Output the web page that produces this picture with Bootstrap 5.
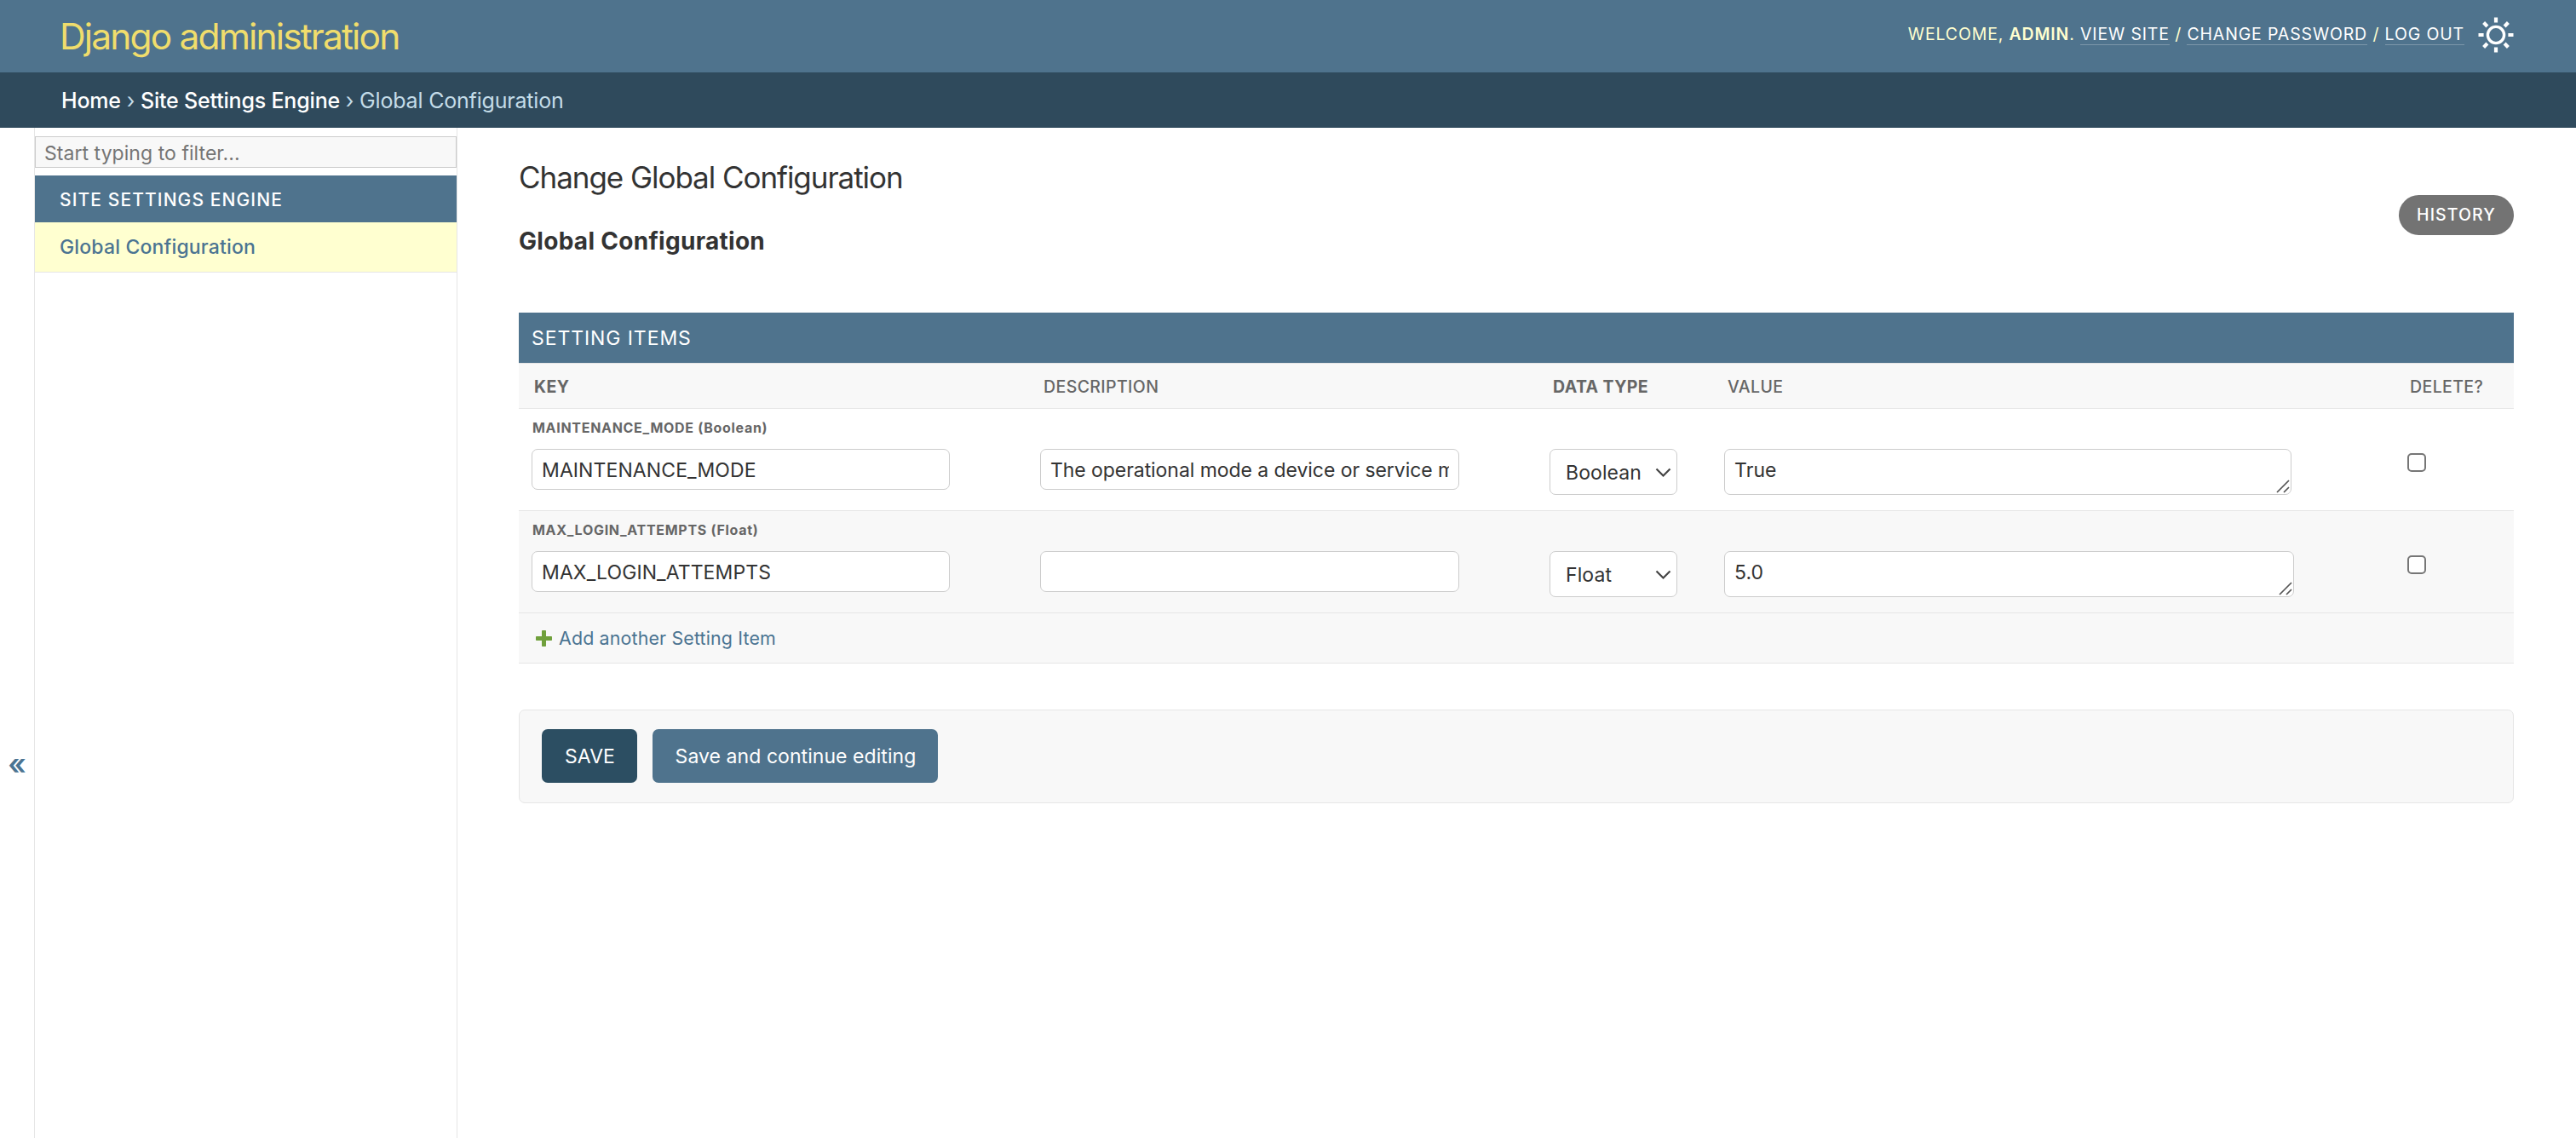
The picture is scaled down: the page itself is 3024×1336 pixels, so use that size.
<!DOCTYPE html>
<html lang="en">
<head>
  <meta charset="UTF-8" />
  <meta name="viewport" content="width=device-width, initial-scale=1" />
  <title>Change Global Configuration | Django site admin</title>
  <link href="https://cdn.jsdelivr.net/npm/bootstrap@5.3.3/dist/css/bootstrap.min.css" rel="stylesheet" />
  <style>
    :root {
      --primary: #4f738d;
      --secondary: #2f4a5c;
      --accent: #f0dd6c;
      --link-fg: #4b7492;
      --body-fg: #333;
      --quiet: #666;
      --hairline: #e6e6e6;
      --border: #ccc;
      --darkened: #f8f8f8;
    }
    body {
      font-family: Inter, "Liberation Sans", sans-serif;
      font-size: 23px;
      line-height: 1;
      color: var(--body-fg);
      background: #fff;
    }
    a {
      text-decoration: none;
      color: var(--link-fg);
    }

    /* Header */
    #site-header {
      height: 85px;
      padding: 0 73px 4px 70px;
      background: var(--primary);
      color: #ffffd0;
    }
    #site-header .navbar-brand {
      font-size: 42.5px;
      font-weight: 400;
      letter-spacing: -1.85px;
      line-height: 81px;
      padding: 3px 0 0;
      color: var(--accent);
    }
    .user-tools {
      font-size: 19.5px;
      letter-spacing: .85px;
      line-height: 24px;
      text-transform: uppercase;
      margin-right: 16px;
      padding-bottom: 1px;
      white-space: nowrap;
    }
    .user-tools a {
      color: #fff;
      border-bottom: 1px solid rgba(255, 255, 255, .25);
    }
    .user-tools strong {
      font-weight: 600;
    }

    /* Breadcrumbs */
    .crumbs {
      height: 65px;
      padding: 2px 72px 0;
      background: var(--secondary);
      color: #c4dce8;
      font-size: 25px;
      letter-spacing: -.19px;
      line-height: 63px;
      white-space: pre;
    }
    .crumbs a {
      color: #fff;
      font-weight: 500;
    }

    /* Sidebar */
    .nav-toggle {
      width: 41px;
      border-right: 1px solid var(--hairline);
      padding-top: 730px;
      font-size: 34px;
      font-weight: 600;
      color: var(--link-fg);
    }
    .side-nav {
      width: 496px;
      border-right: 1px solid var(--hairline);
      padding-top: 10px;
    }
    .side-nav .form-control {
      height: 37px;
      border: 1px solid var(--border);
      border-radius: 0;
      background: var(--darkened);
      padding: 2px 10px 0;
      margin-bottom: 9px;
      font-size: 23px;
      letter-spacing: .05px;
    }
    .side-nav .form-control::placeholder {
      color: #757575;
    }
    .side-caption {
      height: 55px;
      padding: 2px 0 0 29px;
      background: var(--primary);
      color: #fff;
      font-size: 21px;
      font-weight: 500;
      letter-spacing: 1.1px;
    }
    .side-link {
      height: 59px;
      padding-left: 29px;
      background: #ffffd0;
      border-bottom: 1px solid var(--hairline);
      font-weight: 500;
      letter-spacing: .16px;
    }

    /* Content */
    main {
      padding: 0 73px 0 72px;
    }
    h1 {
      font-size: 35px;
      font-weight: 400;
      letter-spacing: -1.05px;
      line-height: 44px;
      margin: 36px 0 0;
    }
    h2.object-name {
      font-size: 28px;
      font-weight: 700;
      letter-spacing: .29px;
      line-height: 36px;
      margin: 35px 0 66px;
    }
    .history-btn {
      width: 135px;
      height: 47px;
      margin-top: 79px;
      border-radius: 24px;
      background: #737373;
      color: #fff;
      font-size: 19.5px;
      font-weight: 500;
      letter-spacing: 1.1px;
    }
    .group-title {
      height: 59px;
      padding: 2px 0 0 15px;
      background: var(--primary);
      color: #fff;
      font-size: 23px;
      font-weight: 400;
      letter-spacing: .92px;
    }
    .setting-items {
      table-layout: fixed;
      --bs-table-bg: transparent;
      --bs-table-color: var(--body-fg);
      border-collapse: separate;
      border-spacing: 0;
    }
    .setting-items > thead > tr > th {
      height: 54px;
      padding: 3px 0 0 18px;
      border-top: 1px solid var(--hairline);
      border-bottom: 1px solid var(--hairline);
      background: var(--darkened);
      color: var(--quiet);
      font-size: 19.5px;
      font-weight: 500;
      letter-spacing: .4px;
      vertical-align: middle;
    }
    .setting-items > thead > tr > th.required {
      font-weight: 700;
    }
    .setting-items > tbody > tr > td {
      height: 120px;
      padding: 47px 0 0 14px;
      border-bottom: 1px solid var(--hairline);
    }
    .setting-items > tbody > tr > td:first-child {
      padding: 0 0 0 15px;
    }
    .setting-items > tbody > tr:nth-child(even) > td {
      background: var(--darkened);
    }
    .original {
      height: 47px;
      padding-left: 1px;
      font-size: 16px;
      font-weight: 700;
      letter-spacing: .7px;
      line-height: 45px;
      color: var(--quiet);
    }
    .setting-items .form-control,
    .setting-items .form-select {
      border: 1px solid var(--border);
      border-radius: 7px;
      background: #fff;
      color: var(--body-fg);
      font-size: 23px;
      letter-spacing: .1px;
      line-height: 28px;
    }
    .setting-items input.form-control {
      width: 492px;
      height: 48px;
      padding: 1px 11px 0;
    }
    .setting-items td:first-child input.form-control {
      width: 491px;
    }
    .setting-items td:nth-child(2) input {
      letter-spacing: -.06px;
    }
    .setting-items .form-select {
      width: 150px;
      height: 54px;
      padding: 2px 0 0 18px;
    }
    .setting-items textarea.form-control {
      width: 666px;
      height: 54px;
      min-height: 0;
      padding: 10px 11px 0;
      resize: none;
      overflow: hidden;
    }
    .setting-items textarea.wider {
      width: 669px;
    }
    .select-arrow {
      position: absolute;
      right: 7px;
      top: 22px;
    }
    .resize-grip {
      position: absolute;
      right: 2px;
      bottom: 2px;
    }
    .setting-items .form-check-input {
      display: block;
      width: 22px;
      height: 22px;
      margin: 5px 0 0 1px;
      border: 2px solid #767676;
      border-radius: 5px;
      background: #fff;
    }
    .add-row {
      height: 59px;
      padding: 1px 0 0 20px;
      background: var(--darkened);
      border-bottom: 1px solid var(--hairline);
    }
    .add-row a {
      font-size: 21.4px;
      letter-spacing: .15px;
    }
    .submit-row {
      height: 110px;
      margin-top: 54px;
      padding: 22px 26px;
      background: var(--darkened);
      border: 1px solid var(--hairline);
      border-radius: 7px;
      gap: 18px;
    }
    .submit-row .btn {
      height: 63px;
      padding: 1px 0 0 1px;
      border: 0;
      border-radius: 7px;
      color: #fff;
      font-size: 23px;
      letter-spacing: .06px;
      line-height: 62px;
    }
    .btn-save {
      width: 112px;
      background: #2c4e62;
    }
    .btn-continue {
      width: 335px;
      background: var(--primary);
    }
  </style>
</head>
<body class="d-flex flex-column vh-100">
  <header id="site-header" class="d-flex align-items-center justify-content-between flex-shrink-0">
    <a class="navbar-brand m-0" href="#">Django administration</a>
    <div class="d-flex align-items-center">
      <div class="user-tools">Welcome, <strong>admin</strong>. <a href="#">View site</a> / <a href="#">Change password</a> / <a href="#">Log out</a></div>
      <svg width="42" height="42" viewBox="-21 -21 42 42" fill="none" stroke="#fff">
        <circle r="9.6" stroke-width="3.4" />
        <path stroke-width="4.2" d="M0-20.5V-14.4M0 20.5V14.4M-20.5 0H-14.4M20.5 0H14.4M-14.4-14.4L-10.1-10.1M14.4-14.4L10.1-10.1M-14.4 14.4L-10.1 10.1M14.4 14.4L10.1 10.1" />
      </svg>
    </div>
  </header>

  <nav class="crumbs flex-shrink-0"><a href="#">Home</a> › <a href="#">Site Settings Engine</a> › Global Configuration</nav>

  <div class="d-flex flex-grow-1">
    <div class="nav-toggle flex-shrink-0 text-center">«</div>
    <nav class="side-nav flex-shrink-0">
      <input type="search" class="form-control" placeholder="Start typing to filter..." />
      <div class="side-caption d-flex align-items-center">SITE SETTINGS ENGINE</div>
      <a class="side-link d-flex align-items-center" href="#">Global Configuration</a>
    </nav>

    <main class="flex-grow-1">
      <div class="d-flex justify-content-between align-items-start">
        <div>
          <h1>Change Global Configuration</h1>
          <h2 class="object-name">Global Configuration</h2>
        </div>
        <a class="history-btn d-flex align-items-center justify-content-center" href="#">HISTORY</a>
      </div>

      <h2 class="group-title d-flex align-items-center mb-0">SETTING ITEMS</h2>
      <table class="table setting-items mb-0">
        <colgroup>
          <col width="598" /><col width="598" /><col width="205" /><col width="801" /><col width="140" />
        </colgroup>
        <thead>
          <tr>
            <th class="required">KEY</th>
            <th>DESCRIPTION</th>
            <th class="required">DATA TYPE</th>
            <th>VALUE</th>
            <th>DELETE?</th>
          </tr>
        </thead>
        <tbody>
          <tr>
            <td>
              <div class="original">MAINTENANCE_MODE (Boolean)</div>
              <input type="text" class="form-control" value="MAINTENANCE_MODE" />
            </td>
            <td><input type="text" class="form-control" value="The operational mode a device or service may be in" /></td>
            <td>
              <div class="position-relative d-inline-block">
                <select class="form-select"><option>Boolean</option></select>
                <svg class="select-arrow" width="19" height="12" fill="none" stroke="#444" stroke-width="2.2"><path d="M1.5 1.5L9.5 9.5L17.5 1.5" /></svg>
              </div>
            </td>
            <td>
              <div class="position-relative d-inline-block">
                <textarea class="form-control" rows="1">True</textarea>
                <svg class="resize-grip" width="16" height="16" stroke="#555" stroke-width="1.7"><path d="M1 15L15 1M9 15L15 9" /></svg>
              </div>
            </td>
            <td><input type="checkbox" class="form-check-input" /></td>
          </tr>
          <tr>
            <td>
              <div class="original">MAX_LOGIN_ATTEMPTS (Float)</div>
              <input type="text" class="form-control" value="MAX_LOGIN_ATTEMPTS" />
            </td>
            <td><input type="text" class="form-control" value="" /></td>
            <td>
              <div class="position-relative d-inline-block">
                <select class="form-select"><option>Float</option></select>
                <svg class="select-arrow" width="19" height="12" fill="none" stroke="#444" stroke-width="2.2"><path d="M1.5 1.5L9.5 9.5L17.5 1.5" /></svg>
              </div>
            </td>
            <td>
              <div class="position-relative d-inline-block">
                <textarea class="form-control wider" rows="1">5.0</textarea>
                <svg class="resize-grip" width="16" height="16" stroke="#555" stroke-width="1.7"><path d="M1 15L15 1M9 15L15 9" /></svg>
              </div>
            </td>
            <td><input type="checkbox" class="form-check-input" /></td>
          </tr>
        </tbody>
      </table>
      <div class="add-row d-flex align-items-center">
        <a class="d-flex align-items-center" href="#">
          <svg class="me-2" width="19" height="19" fill="#70a03c"><path d="M7 .8Q7 0 7.8 0H11.2Q12 0 12 .8V7H18.2Q19 7 19 7.8V11.2Q19 12 18.2 12H12V18.2Q12 19 11.2 19H7.8Q7 19 7 18.2V12H.8Q0 12 0 11.2V7.8Q0 7 .8 7H7Z" /></svg>
          Add another Setting Item
        </a>
      </div>

      <div class="submit-row d-flex">
        <button type="button" class="btn btn-save">SAVE</button>
        <button type="button" class="btn btn-continue">Save and continue editing</button>
      </div>
    </main>
  </div>

  <script src="https://cdn.jsdelivr.net/npm/bootstrap@5.3.3/dist/js/bootstrap.bundle.min.js"></script>
</body>
</html>
